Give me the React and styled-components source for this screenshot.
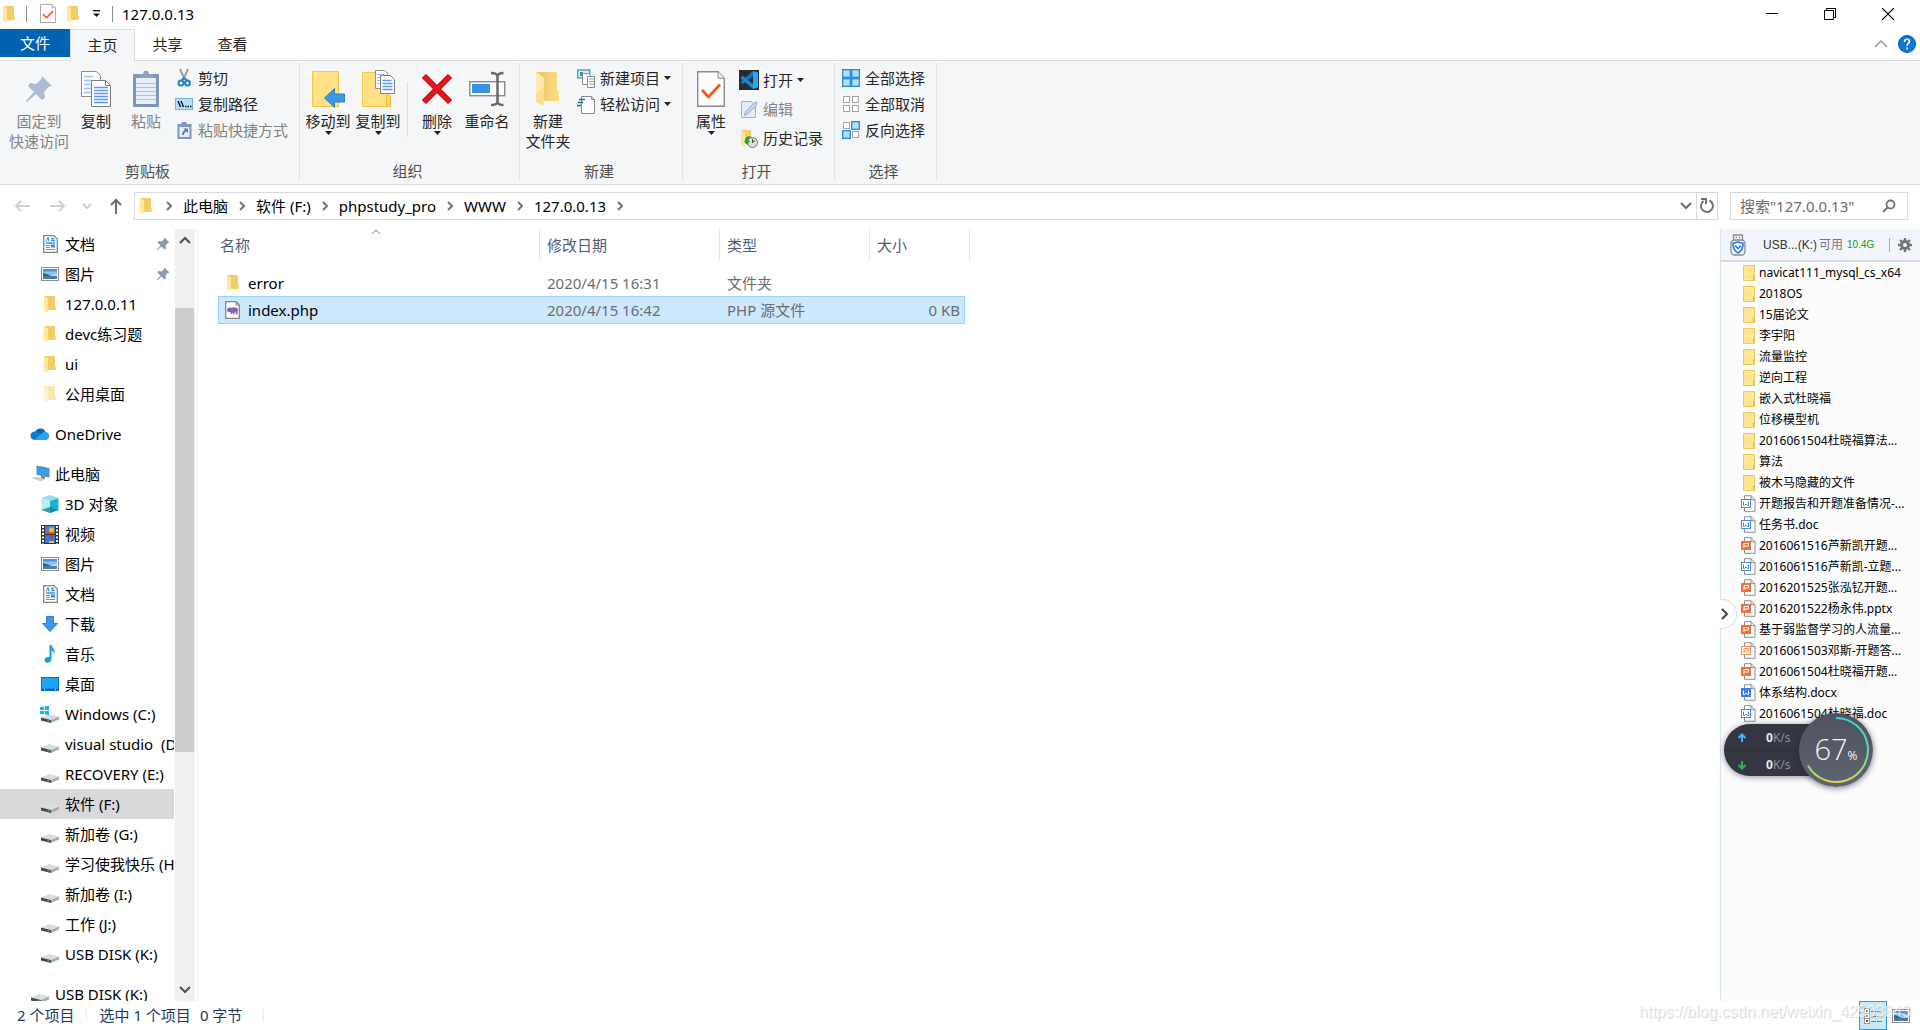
import React from "react";
import styled, { createGlobalStyle } from "styled-components";

const GlobalStyle = createGlobalStyle`
  *, *::before, *::after { box-sizing: border-box; }
  html, body, #root { height: 100%; }
  body {
    margin: 0;
    overflow: hidden;
    background: #fff;
    color: #000;
    font: 15px/20px "Noto Sans", "Noto Sans CJK SC", sans-serif;
  }
  button, input { font: inherit; color: inherit; }
  button { border: 0; padding: 0; background: none; white-space: nowrap; }
  ul, ol { list-style: none; margin: 0; padding: 0; }
  svg { display: block; flex: none; }
  a { color: inherit; text-decoration: none; }
`;

/* ---------- layout ---------- */

const Window = styled.div`
  display: flex;
  flex-direction: column;
  height: 100vh;
`;

const TitleBar = styled.header`
  display: flex;
  align-items: center;
  height: 29px;
  flex: none;
  padding: 0 3px 2px 0;
`;

const QuickAccess = styled.div`
  display: flex;
  align-items: center;
  flex: 1;
  gap: 5px;
`;

const QuickButton = styled.button`
  display: flex;
  align-items: center;
  justify-content: center;
  width: ${(p) => (p.$narrow ? "16px" : "20px")};
  height: 20px;
`;

const TitleDivider = styled.span`
  width: 1px;
  height: 16px;
  background: #8c8c8c;
  margin: 0 6px 0 3px;
`;

const WindowTitle = styled.h1`
  margin: 0 0 0 -2px;
  font-size: 15px;
  font-weight: 400;
`;

const WindowButton = styled.button`
  display: flex;
  align-items: center;
  justify-content: center;
  width: 58px;
  height: 27px;
`;

const TabStrip = styled.nav`
  display: flex;
  height: 32px;
  flex: none;
  border-bottom: 1px solid #dadbdc;
  padding-right: 4px;
`;

const Tab = styled.button`
  width: 65px;
  height: 30px;
  color: #262626;
`;

const FileTab = styled(Tab)`
  width: 70px;
  height: 28px;
  background: #0063b1;
  color: #fff;
`;

const ActiveTab = styled(Tab)`
  height: 32px;
  padding-bottom: 2px;
  background: #f5f6f7;
  border: 1px solid #dadbdc;
  border-bottom: 0;
`;

const TabTools = styled.div`
  display: flex;
  align-items: center;
  gap: 10px;
  margin-left: auto;
  padding-bottom: 2px;
`;

const Ribbon = styled.section`
  display: flex;
  height: 124px;
  flex: none;
  padding: 2px 0 3px;
  background: #f5f6f7;
  border-bottom: 1px solid #dadbdc;
`;

const RibbonGroup = styled.div`
  display: flex;
  flex-direction: column;
  justify-content: space-between;
  padding: 0 7px 0 3px;
  border-right: 1px solid #e2e3e4;
`;

const GroupBody = styled.div`
  display: flex;
  padding-top: 4px;
`;

const GroupName = styled.span`
  text-align: center;
  color: #505050;
`;

const BigButton = styled.button`
  display: flex;
  flex-direction: column;
  align-items: center;
  width: ${(p) => (p.$wide ? "68px" : "50px")};
  padding-left: ${(p) => (p.$wide ? "4px" : "0")};
  height: 88px;
  color: ${(p) => (p.disabled ? "#838383" : "#262626")};
`;

const BigIcon = styled.span`
  display: flex;
  align-items: center;
  justify-content: center;
  height: 44px;
`;

const SmallColumn = styled.div`
  display: flex;
  flex-direction: column;
  gap: ${(p) => (p.$loose ? "9px" : "6px")};
  padding: ${(p) => (p.$loose ? "3px 4px 0 3px" : "1px 4px 0 3px")};
`;

const SmallButton = styled.button`
  display: flex;
  align-items: center;
  gap: 4px;
  height: 20px;
  color: ${(p) => (p.disabled ? "#838383" : "#262626")};
`;

const SmallIcon = styled.span`
  display: flex;
  align-items: center;
  justify-content: center;
  width: 20px;
  height: 20px;
`;

const BodyDivider = styled.span`
  width: 1px;
  height: 55px;
  margin: 15px 4px 0;
  background: #dfe0e1;
`;

const NavBar = styled.div`
  display: flex;
  align-items: center;
  height: 44px;
  flex: none;
  padding: 0 12px 2px 4px;
`;

const NavButton = styled.button`
  display: flex;
  align-items: center;
  justify-content: center;
  width: ${(p) => (p.$narrow ? "22px" : "36px")};
  height: 28px;
`;

const AddressBox = styled.div`
  display: flex;
  align-items: center;
  flex: 1;
  height: 28px;
  border: 1px solid #d9d9d9;
  padding-left: 2px;
`;

const Crumbs = styled.ol`
  display: flex;
  align-items: center;
  flex: 1;
  & > li { display: flex; align-items: center; }
`;

const CrumbArrow = styled.span`
  display: flex;
  justify-content: center;
  width: 28px;
`;

const AddressButton = styled.button`
  display: flex;
  align-items: center;
  justify-content: center;
  width: 21px;
  height: 26px;
  border-left: ${(p) => (p.$divided ? "1px solid #d9d9d9" : "0")};
`;

const SearchBox = styled.label`
  display: flex;
  align-items: center;
  width: 178px;
  height: 28px;
  margin-left: 12px;
  padding: 0 11px 0 9px;
  border: 1px solid #d9d9d9;
`;

const SearchInput = styled.input`
  flex: 1;
  min-width: 0;
  padding: 0;
  border: 0;
  outline: 0;
  background: none;
  &::placeholder { color: #6d6d6d; opacity: 1; }
`;

const Main = styled.div`
  display: flex;
  flex: 1;
  min-height: 0;
`;

const Sidebar = styled.aside`
  display: flex;
  width: 198px;
  flex: none;
  border-right: 1px solid #f2f2f2;
`;

const Tree = styled.ul`
  width: 174px;
  overflow: hidden;
`;

const TreeItem = styled.li`
  display: flex;
  align-items: center;
  height: 30px;
  margin-top: ${(p) => (p.$section ? "10px" : "0")};
  padding-left: ${(p) => (p.$top ? "30px" : "40px")};
  padding-right: 4px;
  gap: 5px;
  background: ${(p) => (p.$selected ? "#d9d9d9" : "transparent")};
  white-space: pre;
`;

const TreeIcon = styled.span`
  display: flex;
  align-items: center;
  justify-content: center;
  width: 20px;
  flex: none;
`;

const TreeLabel = styled.a`
  flex: 1 0 auto;
`;

const ScrollBar = styled.div`
  display: flex;
  flex-direction: column;
  justify-content: space-between;
  width: 20px;
  margin-left: 1px;
  background: #f0f0f0;
`;

const ScrollButton = styled.button`
  display: flex;
  align-items: center;
  justify-content: center;
  width: 19px;
  height: 22px;
`;

const ScrollTrack = styled.div`
  display: flex;
  flex-direction: column;
  flex: 1;
  &::before { content: ""; flex: 57; }
  &::after { content: ""; flex: 227; }
`;

const ScrollThumb = styled.div`
  flex: 444;
  width: 19px;
  background: #cdcdcd;
`;

const FileArea = styled.main`
  flex: 1;
  min-width: 0;
  padding-left: 20px;
`;

const FileTable = styled.table`
  width: 747px;
  table-layout: fixed;
  border-collapse: collapse;
  text-align: left;
`;

const HeadCell = styled.th`
  position: relative;
  width: ${(p) => p.$width};
  height: 32px;
  padding: 0 0 0 ${(p) => (p.$first ? "2px" : "7px")};
  font-weight: 400;
  color: #4c607a;
  &::after {
    content: "";
    position: absolute;
    top: 0;
    right: ${(p) => (p.$last ? "-5px" : "0")};
    width: 1px;
    height: 32px;
    background: #e5e5e5;
  }
`;

const SortMark = styled.span`
  position: absolute;
  top: 0;
  left: 50%;
  margin-left: -8px;
`;

const BodySpacer = styled.tr`
  height: 8px;
`;

const FileRow = styled.tr`
  height: ${(p) => (p.$selected ? "28px" : "27px")};
  background: ${(p) => (p.$selected ? "#cce8ff" : "transparent")};
  outline: ${(p) => (p.$selected ? "1px solid #99d1ff" : "0")};
  outline-offset: -1px;
`;

const FileCell = styled.td`
  padding: 0 5px 0 7px;
  color: #6d6d6d;
  text-align: ${(p) => (p.$right ? "right" : "left")};
`;

const FileName = styled.a`
  display: flex;
  align-items: center;
  gap: 8px;
  color: #000;
`;

const FileIcon = styled.span`
  display: flex;
  justify-content: center;
  width: 15px;
`;

const UsbPane = styled.aside`
  position: relative;
  width: 200px;
  flex: none;
  background: #fcfcfc;
  border-left: 1px solid #d3e5f7;
`;

const UsbHeader = styled.header`
  display: flex;
  align-items: center;
  height: 33px;
  padding: 0 8px 0 9px;
  background: #f2f6fc;
  border-bottom: 2px solid #d4dae3;
  font-size: 12px;
  line-height: 20px;
  color: #777;
`;

const UsbName = styled.span`
  margin-left: 17px;
  color: #333;
  font-family: "Liberation Sans", "Noto Sans CJK SC", sans-serif;
`;

const UsbFree = styled.span`
  margin: 0 4px 0 2px;
`;

const UsbSize = styled.span`
  color: #159a15;
  font-size: 10px;
  font-family: "Liberation Sans", sans-serif;
`;

const UsbDivider = styled.span`
  width: 1px;
  height: 14px;
  margin: 0 8px 0 auto;
  background: #aaa;
`;

const UsbList = styled.ul`
  font-size: 12px;
  line-height: 21px;
`;

const UsbItem = styled.li`
  display: flex;
  align-items: center;
  gap: 3px;
  height: 21px;
  padding-left: 20px;
  white-space: nowrap;
`;

const PaneToggle = styled.button`
  position: absolute;
  left: -1px;
  top: 370px;
  display: flex;
  align-items: center;
  justify-content: center;
  width: 17px;
  height: 30px;
  padding-right: 6px;
  background: #fff;
  border: 1px solid #d3e0ee;
  border-left: 0;
  border-radius: 0 15px 15px 0;
`;

const SpeedWidget = styled.div`
  position: absolute;
  left: 3px;
  top: 484px;
  display: flex;
  align-items: center;
  width: 149px;
  height: 74px;
`;

const SpeedPill = styled.div`
  width: 100px;
  height: 52px;
  border-radius: 26px 0 0 26px;
  background: #343741;
  box-shadow: 0 1px 6px rgba(40, 30, 70, 0.5);
`;

const SpeedLine = styled.div`
  display: flex;
  align-items: center;
  height: 26px;
  padding: 2px 0 0 13px;
  gap: 19px;
  color: #8d919b;
  font-size: 12px;
  line-height: 20px;
  & + & { border-top: 1px solid #2b2e36; }
  & b { color: #e8e8ea; }
`;

const Gauge = styled.div`
  position: relative;
  display: flex;
  align-items: baseline;
  justify-content: center;
  width: 74px;
  height: 74px;
  margin-left: -25px;
  padding-top: 16px;
  border-radius: 50%;
  background: linear-gradient(#4e525f, #5f6472);
  box-shadow: 0 1px 6px rgba(30, 30, 50, 0.6);
  color: #f2f2f4;
  font-family: "Open Sans", "Noto Sans", sans-serif;
  font-size: 29px;
  line-height: 40px;
  font-weight: 300;
  & small { font-size: 12px; font-weight: 400; }
  & svg { position: absolute; left: 0; top: 0; }
`;

const StatusBar = styled.footer`
  position: relative;
  display: flex;
  align-items: center;
  height: 29px;
  flex: none;
  padding-left: 17px;
  color: #1e395b;
`;

const StatusInfo = styled.div`
  display: flex;
  align-items: center;
  padding-bottom: 2px;
`;

const StatusDivider = styled.span`
  width: 1px;
  height: 14px;
  margin: 0 12px;
  background: #ececec;
`;

const StatusText = styled.span`
  margin-right: 9px;
  &:first-child { margin: 0; }
`;

const ViewButtons = styled.div`
  display: flex;
  margin-left: auto;
  padding-right: 5px;
`;

const ViewButton = styled.button`
  display: flex;
  align-items: center;
  justify-content: center;
  width: 28px;
  height: 29px;
  background: ${(p) => (p.$active ? "#cbe8f6" : "transparent")};
  border: ${(p) => (p.$active ? "1px solid #26a0da" : "0")};
`;

const Watermark = styled.span`
  position: absolute;
  right: 9px;
  top: 1px;
  color: rgba(255, 255, 255, 0.7);
  text-shadow: 1px 1px 1px rgba(140, 140, 140, 0.4);
  font: 16px/20px "Liberation Sans", sans-serif;
  pointer-events: none;
`;

/* ---------- icons ---------- */

const Folder = ({ size = 18, faded }) => (
  <svg width={size} height={size} viewBox="0 0 18 18" opacity={faded ? 0.5 : 1}>
    <path d="M3 1h11v9.5l1 1V15H6z" fill="#f7d673" />
    <path d="M3 1h11v9.5l-1 1V15H8z" fill="#efc75e" opacity=".55" />
    <path d="M3 1l4 2.5v14L3 15.5z" fill="#ffe79b" />
  </svg>
);

const FolderNew = () => (
  <svg width="28" height="38" viewBox="0 0 28 38">
    <defs>
      <linearGradient id="fn" x1="0" x2="1"><stop offset="0" stopColor="#e9c35c" /><stop offset="1" stopColor="#ffdf87" /></linearGradient>
    </defs>
    <path d="M2 2h21v17l2 3v9H8z" fill="url(#fn)" />
    <path d="M2 2l8 6v27l-1 1-7-4z" fill="#ffe08a" />
    <path d="M2 2l8 6v8L2 24z" fill="#ffeeb4" opacity=".8" />
  </svg>
);

const FlatFolder = () => (
  <svg width="15" height="18" viewBox="0 0 15 18">
    <path d="M2.5 1.5h11v15h-11z" fill="#ffe591" stroke="#eccb55" />
    <path d="M12.500 16v-4.500l1-1" fill="none" stroke="#e3bd42" />
  </svg>
);

const Caret = () => (
  <svg width="7" height="4" viewBox="0 0 7 4"><path d="M0 0h7L3.5 4z" fill="#1f1f1f" /></svg>
);

const CheckDoc = ({ w = 16, h = 19 }) => (
  <svg width={w} height={h} viewBox="0 0 28 36" preserveAspectRatio="none">
    <path d="M.7.7H21l6.3 6.5v28H.7z" fill="#fff" stroke="#8b8b8b" strokeWidth="1.4" />
    <path d="M21 .7v6.5h6.3" fill="#eee" stroke="#8b8b8b" />
    <path d="M5 19l6.5 7L23 13.5" fill="none" stroke="#f0561d" strokeWidth="2.8" />
  </svg>
);

const Pin = ({ size = 28, color = "#acbdd3" }) => (
  <svg width={size} height={size} viewBox="0 0 28 28">
    <path d="M17 1l10 10-3.500 1-4.500 5 1 6-3 2-6-6-9 8-1-1 8-9-6-6 2-3 6 1 5-4.500z" fill={color} />
  </svg>
);

const CopyDocs = () => (
  <svg width="32" height="38" viewBox="0 0 32 38">
    <path d="M1.500 1.500h15l4 4v21h-19z" fill="#fff" stroke="#8e8e8e" />
    <path d="M4 6.500h9M4 10.500h10M4 14.500h7M4 18.500h7M4 22.500h7" stroke="#9fc0f5" strokeWidth="1.500" />
    <path d="M11.500 10.500h14l5 5v21h-19z" fill="#fff" stroke="#7c7c7c" />
    <path d="M25.500 10.500v5h5" fill="none" stroke="#7c7c7c" />
    <path d="M14 17.500h14M14 20.500h14M14 23.500h14M14 26.500h14M14 29.500h14M14 32.500h14" stroke="#5b99f5" strokeWidth="1.500" />
  </svg>
);

const Clipboard = () => (
  <svg width="28" height="38" viewBox="0 0 28 38">
    <rect x="1" y="4" width="26" height="33" rx="1" fill="#8095b8" />
    <rect x="4" y="8" width="20" height="26" fill="#e8eef7" />
    <path d="M4 13.500h20M4 17.500h20M4 21.500h20M4 25.500h20M4 29.500h20" stroke="#b5c4dc" />
    <path d="M7 8V4h4l1-3h4l1 3h4v4z" fill="#8ba1c2" />
  </svg>
);

const Scissors = () => (
  <svg width="16" height="20" viewBox="0 0 16 20">
    <path d="M4 1l5 11M12 1L7 12" stroke="#9a9fa5" strokeWidth="2" />
    <circle cx="5" cy="15" r="2.500" fill="none" stroke="#1f86c4" strokeWidth="2" />
    <circle cx="11.500" cy="15" r="2.500" fill="none" stroke="#1f86c4" strokeWidth="2" />
    <path d="M6 12l2-2 3 2" stroke="#1f86c4" strokeWidth="2" fill="none" />
  </svg>
);

const PathIcon = () => (
  <svg width="18" height="12" viewBox="0 0 18 12">
    <rect x=".5" y=".5" width="17" height="11" fill="#b9def8" stroke="#79b3dc" />
    <path d="M3 3l2.500 6M6 3l2.500 6" stroke="#111" strokeWidth="1.400" />
    <path d="M10 8.500h1.500M12.500 8.500H14M15 8.500h1.500" stroke="#111" strokeWidth="1.500" />
  </svg>
);

const PasteLink = () => (
  <svg width="15" height="19" viewBox="0 0 15 19">
    <path d="M.5 3H4l1-2h4l1 2h4.500v15H.500z" fill="#8197bb" />
    <rect x="2.500" y="6" width="10" height="10" fill="#e6edf6" />
    <path d="M5 14c0-3 1-4 3-5L6.500 7.500H11V12L9.500 10.500C8 11 7 12 7 14z" fill="#5f7ba8" />
  </svg>
);

const MoveTo = () => (
  <svg width="34" height="38" viewBox="0 0 34 38">
    <path d="M1.500 1.500h26v35h-26z" fill="#ffe084" stroke="#f0c948" />
    <path d="M4.500 2v34" stroke="#ffedb5" />
    <path d="M13.500 28l10-9.500v5.500h10v8h-10v5.500z" fill="#3d98e6" stroke="#2b7fc6" />
  </svg>
);

const CopyTo = () => (
  <svg width="34" height="38" viewBox="0 0 34 38">
    <path d="M1.500 2.500h25v23l3 1v10h-28z" fill="#ffe084" stroke="#f0c948" />
    <path d="M25.500 36V26l2-1.500 2 1.500v10" fill="#ffd667" stroke="#e9bd3b" />
    <path d="M14.500.500h9l3 3v15h-12z" fill="#fff" stroke="#909090" />
    <path d="M16 4.500h7M16 7.500h4M16 10.500h4M16 13.500h4" stroke="#8fb8f5" />
    <path d="M19.500 5.500h10l4 4v14h-14z" fill="#fff" stroke="#7f7f7f" />
    <path d="M21.500 10.500h9M21.500 13.500h10M21.500 16.500h10M21.500 19.500h10" stroke="#5b99f5" strokeWidth="1.500" />
  </svg>
);

const DeleteX = () => (
  <svg width="32" height="32" viewBox="0 0 32 32">
    <path d="M3 3l26 26M29 3L3 29" stroke="#a80d16" strokeWidth="6" />
    <path d="M3 3l26 26M29 3L3 29" stroke="#e8111c" strokeWidth="4.500" />
  </svg>
);

const Rename = () => (
  <svg width="37" height="36" viewBox="0 0 37 36">
    <rect x=".7" y="10.700" width="35" height="14" fill="#fff" stroke="#8b8b8b" strokeWidth="1.400" />
    <rect x="3" y="13" width="18" height="9" fill="#3794e8" />
    <path d="M28.500 4v28M22 2c4 0 6 1 6.500 3 .5-2 2.500-3 6-3M22 34c4 0 6-1 6.500-3 .5 2 2.500 3 6 3" fill="none" stroke="#686868" strokeWidth="2.500" />
  </svg>
);

const NewItem = () => (
  <svg width="19" height="19" viewBox="0 0 19 19">
    <rect x=".7" y="1" width="12" height="8" fill="#d6edf8" stroke="#4d94bb" strokeWidth="1.300" />
    <path d="M3 3h3v4H3z" fill="#4d8f86" />
    <path d="M5.500 4.500h6l2 2v9h-8z" fill="#fff" stroke="#8b8b8b" />
    <path d="M10.500 7.500h7v11h-7z" fill="#fff" stroke="#8b8b8b" />
    <path d="M12 10h5M12 12.500h5M12 15h5" stroke="#6ba3ef" />
  </svg>
);

const EasyAccess = () => (
  <svg width="19" height="19" viewBox="0 0 19 19">
    <path d="M4.500 1.500h10l3 3v14h-13z" fill="#fff" stroke="#8b8b8b" />
    <path d="M14.500 1.500v3h3" fill="none" stroke="#8b8b8b" />
    <path d="M2 4.500h6M1 7.500h5M0 10.500h4" stroke="#1c69b5" strokeWidth="1.500" />
  </svg>
);

const VsCode = () => (
  <svg width="20" height="20" viewBox="0 0 20 20">
    <rect width="20" height="20" fill="#2a2b2e" />
    <path d="M14 1v5L4 14l-2-1v-1.500z" fill="#0a79c4" />
    <path d="M14 19v-5L4 6 2 7v1.500z" fill="#1789d6" />
    <path d="M14 1l5 1.500v15L14 19z" fill="#2ba4f3" />
  </svg>
);

const EditDoc = () => (
  <svg width="17" height="19" viewBox="0 0 17 19">
    <path d="M.500 1.500h10l4 4v12H.500z" fill="#e4ebf5" stroke="#9db1cf" />
    <path d="M3.500 15.500l1-4L13 3l3-1-1 4-8.500 8z" fill="#c6d3e6" stroke="#9db1cf" />
  </svg>
);

const History = () => (
  <svg width="18" height="19" viewBox="0 0 18 19">
    <path d="M1 1h10v14H4z" fill="#f3cf69" /><path d="M1 1l4 3v14l-4-3z" fill="#ffe491" />
    <circle cx="12.500" cy="13.500" r="5" fill="#dcdcdc" stroke="#777" />
    <path d="M12.500 10v3.500l2.500-2" fill="none" stroke="#444" />
    <path d="M5 12h3c0-3 2-4 4-4-4-2-7 0-7 4zM4 12l3 4 3-4z" fill="#1ea52b" />
  </svg>
);

const Squares = ({ on }) => (
  <svg width="18" height="18" viewBox="0 0 18 18">
    {[[0, 0], [9, 0], [0, 9], [9, 9]].map(([x, y], i) => (
      <rect
        key={i}
        x={x + (on[i] ? 0.7 : 1.5)}
        y={y + (on[i] ? 0.7 : 1.5)}
        width={on[i] ? 7.6 : 6}
        height={on[i] ? 7.6 : 6}
        fill={on[i] ? "#b6e0ff" : "#fdfdfd"}
        stroke={on[i] ? "#2f8fdd" : "#a5a5a5"}
        strokeWidth={on[i] ? 1.4 : 1}
      />
    ))}
  </svg>
);

const Arrow = ({ d, color = "#d0d0d0", w = 16, h = 16, sw = 2 }) => (
  <svg width={w} height={h} viewBox={`0 0 ${w} ${h}`}><path d={d} fill="none" stroke={color} strokeWidth={sw} /></svg>
);

const Refresh = () => (
  <svg width="16" height="16" viewBox="0 0 16 16">
    <path d="M10.500 2.500a6 6 0 1 1-6 .500" fill="none" stroke="#6e6e6e" strokeWidth="2" />
    <path d="M2 1h5v5" fill="none" stroke="#6e6e6e" strokeWidth="2" />
  </svg>
);

const Magnifier = () => (
  <svg width="14" height="14" viewBox="0 0 14 14">
    <circle cx="8.500" cy="5.500" r="4" fill="none" stroke="#747474" strokeWidth="1.800" />
    <path d="M5.500 8.500L1 13" stroke="#747474" strokeWidth="2" />
  </svg>
);

const DocText = () => (
  <svg width="15" height="18" viewBox="0 0 15 18">
    <path d="M.7.700H11l3.300 3.300v13.300H.700z" fill="#fff" stroke="#868686" strokeWidth="1.300" />
    <path d="M8 3.500h3M8 5.500h4M3 8h9" stroke="#2f9bea" strokeWidth="1.300" />
    <path d="M3 6.500L5 2.500l1 4" stroke="#2a86cf" fill="none" />
    <path d="M3 10.500h4M3 12.500h4M3 14.500h9" stroke="#8a8a8a" />
    <rect x="8" y="9.500" width="4" height="3" fill="#2d9ad8" />
  </svg>
);

const PictureIcon = () => (
  <svg width="18" height="14" viewBox="0 0 18 14">
    <rect x=".500" y=".500" width="17" height="13" fill="#fff" stroke="#8d8d8d" />
    <rect x="2" y="2" width="14" height="10" fill="#8ec3f7" />
    <path d="M2 2h14v2.500H2z" fill="#4e8fe6" />
    <path d="M2 6l4 1 5 2.500H2z" fill="#2f6b62" />
    <path d="M2 9h14v3H2z" fill="#487f9b" />
    <path d="M9 8.500l7-1.500v2z" fill="#c9e4f5" />
  </svg>
);

const Cloud = () => (
  <svg width="20" height="14" viewBox="0 0 20 14">
    <path d="M5 6a5.500 5.500 0 0 1 10.500-1L12 9z" fill="#0a64b8" />
    <path d="M4.500 13A4.200 4.200 0 0 1 5 4.500c2 0 3 1 4 1.500l3 4z" fill="#1079d2" />
    <path d="M4 13l8-7c1-1 3-1.500 4-1a4.200 4.200 0 0 1 .5 8z" fill="#27a3ee" />
  </svg>
);

const Computer = () => (
  <svg width="20" height="18" viewBox="0 0 20 18">
    <path d="M7 1l12 2.500V12L7 9.500z" fill="#35a1ee" stroke="#5d7587" strokeWidth=".8" />
    <path d="M11 11l4 .8v2h-4z" fill="#777" />
    <path d="M1 13l5-1.500 9 2.500-4 2.500z" fill="#cbd0d4" />
  </svg>
);

const Cube = () => (
  <svg width="18" height="18" viewBox="0 0 18 18">
    <path d="M9 0l8.500 3L9 6 .500 3z" fill="#8fe3e6" />
    <path d="M.500 3L9 6v12l-8.500-3z" fill="#bdeeee" />
    <path d="M17.500 3L9 6v12l8.500-3z" fill="#18b3cf" />
    <path d="M9 12l8.500 3L9 18 .500 15z" fill="#0a8a9c" opacity=".8" />
  </svg>
);

const Film = () => (
  <svg width="18" height="19" viewBox="0 0 18 19">
    <rect width="18" height="19" fill="#333" />
    <path d="M2 1v18M16 1v18" stroke="#fff" strokeWidth="2" strokeDasharray="2 1.500" />
    <rect x="4" y="1" width="10" height="8" fill="#4e7fd8" /><rect x="4" y="10" width="10" height="8" fill="#3f74d4" />
    <circle cx="10.500" cy="5" r="2.500" fill="#e7c52b" /><path d="M4 7h10v2H4z" fill="#d4572e" />
    <circle cx="10.500" cy="12" r="1.500" fill="#c83b35" /><path d="M8 16h5v2H8z" fill="#e7c52b" />
  </svg>
);

const Download = () => (
  <svg width="18" height="18" viewBox="0 0 18 18"><path d="M5.500 1.500h7v7h4L9 16.500l-7.500-8h4z" fill="#3c98e8" stroke="#2f7fc6" /></svg>
);

const Note = () => (
  <svg width="14" height="18" viewBox="0 0 14 18">
    <path d="M6.500 0h2c.5 3 4.500 4.500 3 9-.5-2.500-1.500-3-3-3.500V14c0 4-6.500 5-7 1.500C1.300 12.500 4 11.500 6.500 12z" fill="#119bf1" />
  </svg>
);

const Desktop = () => (
  <svg width="18" height="14" viewBox="0 0 18 14">
    <rect x=".5" y=".5" width="17" height="13" fill="#1fa2fa" stroke="#0b70bd" />
    <path d="M1 12.500h16" stroke="#0c5a9b" strokeWidth="1.500" /><path d="M3 12.500h1M14 12.500h1" stroke="#fff" />
  </svg>
);

const Drive = ({ win }) => (
  <svg width="20" height="20" viewBox="0 0 20 20">
    <path d="M1 13.500L9 10l10 2.500-8 3.500z" fill="#dcdddf" />
    <path d="M1 13.500l10 2.500v3L1 16.500z" fill="#444a47" />
    <path d="M11 16l8-3.500v3L11 19z" fill="#a9abad" />
    <path d="M7.500 16.500l2 .5" stroke="#4dd35a" strokeWidth="1.200" />
    {win && <path d="M0 3l4-.5V6H0zM4.800 2.300L9 2v4H4.800zM0 7h4v3.300L0 10zM4.800 7H9v4l-4.200-.5z" fill="#0fb3f0" />}
  </svg>
);

const PhpFile = () => (
  <svg width="15" height="18" viewBox="0 0 15 18">
    <path d="M.7.700H11l3.300 3.300v13.300H.700z" fill="#fff" stroke="#868686" strokeWidth="1.300" />
    <path d="M11 .7V4h3.300" fill="none" stroke="#868686" />
    <path d="M2 9.500C2 6.500 5 6 6.500 7c2-1.500 6.500-.5 6.500 1.500l-.5 2.500v2.500H11V11.500H9.500v2H8V11.500L6.500 13l-1-.5V11L3 11z" fill="#8a63b0" />
  </svg>
);

const OfficeFile = ({ color, solid, word }) => (
  <svg width="15" height="17" viewBox="0 0 15 17">
    <path d="M3.500 4V.700H10l4 4v11.600H3.500V13" fill="#fff" stroke="#8e8e8e" />
    <path d="M10 .7v4h4" fill="none" stroke="#8e8e8e" />
    <rect x=".5" y="4.500" width="9" height="8" fill={solid ? color : "#fff"} stroke={color} />
    <path
      d={word ? "M2.500 6.500v4h1L5 9l1.500 1.500h1v-4" : "M3 11V6.500h4.500V9H3"}
      fill="none"
      stroke={solid ? "#fff" : color}
    />
  </svg>
);

const UsbStick = () => (
  <svg width="16" height="22" viewBox="0 0 16 22">
    <path d="M3.500 6V1h9v5" fill="#fff" stroke="#8a8a8a" strokeWidth="1.300" /><path d="M5.500 3.500h1.500M9 3.500h1.500" stroke="#888" strokeWidth="1.500" />
    <rect x="1" y="6" width="14" height="15" rx="3.500" fill="#f7f7f7" stroke="#8a8a8a" strokeWidth="1.300" />
    <path d="M8 8l5 1.500c0 5-1.500 7.500-5 9.500-3.500-2-5-4.500-5-9.500z" fill="#fff" stroke="#2f7df6" strokeWidth="1.700" />
    <path d="M5 11.500l3 3 3-3" fill="none" stroke="#2f7df6" strokeWidth="1.700" />
  </svg>
);

const Gear = () => (
  <svg width="14" height="14" viewBox="0 0 14 14">
    <circle cx="7" cy="7" r="3.500" fill="none" stroke="#757575" strokeWidth="3" />
    <path d="M7 0v3M7 11v3M0 7h3M11 7h3M2 2l2 2M10 10l2 2M12 2l-2 2M4 10l-2 2" stroke="#757575" strokeWidth="2.400" />
  </svg>
);

const Help = () => (
  <svg width="18" height="18" viewBox="0 0 18 18">
    <circle cx="9" cy="9" r="8.500" fill="#0a78d6" stroke="#0b5a9f" />
    <path d="M6.500 7c0-3.500 5-3.500 5-.5 0 2-2.500 2-2.500 4.500M9 12.500v2" fill="none" stroke="#fff" strokeWidth="1.600" />
  </svg>
);

const DetailsView = () => (
  <svg width="20" height="18" viewBox="0 0 20 18">
    {["#3d6f9e", "#b39b3c", "#c0392b"].map((c, i) => (
      <g key={c}>
        <rect x="1.500" y={1.5 + i * 5} width="5" height="5" fill="#fff" stroke="#999" />
        <rect x="3" y={3 + i * 5} width="2" height="2" fill={c} />
        <path d={`M8 ${4.5 + i * 5}h5M14 ${4.5 + i * 5}h5`} stroke="#777" />
      </g>
    ))}
  </svg>
);

/* ---------- data ---------- */

const tree = [
  { label: "文档", icon: <DocText />, pinned: true },
  { label: "图片", icon: <PictureIcon />, pinned: true },
  { label: "127.0.0.11", icon: <Folder /> },
  { label: "devc练习题", icon: <Folder /> },
  { label: "ui", icon: <Folder /> },
  { label: "公用桌面", icon: <Folder faded /> },
  { label: "OneDrive", icon: <Cloud />, top: true, section: true },
  { label: "此电脑", icon: <Computer />, top: true, section: true },
  { label: "3D 对象", icon: <Cube /> },
  { label: "视频", icon: <Film /> },
  { label: "图片", icon: <PictureIcon /> },
  { label: "文档", icon: <DocText /> },
  { label: "下载", icon: <Download /> },
  { label: "音乐", icon: <Note /> },
  { label: "桌面", icon: <Desktop /> },
  { label: "Windows (C:)", icon: <Drive win /> },
  { label: "visual studio  (D:)", icon: <Drive /> },
  { label: "RECOVERY (E:)", icon: <Drive /> },
  { label: "软件 (F:)", icon: <Drive />, selected: true },
  { label: "新加卷 (G:)", icon: <Drive /> },
  { label: "学习使我快乐 (H:)", icon: <Drive /> },
  { label: "新加卷 (I:)", icon: <Drive /> },
  { label: "工作 (J:)", icon: <Drive /> },
  { label: "USB DISK (K:)", icon: <Drive /> },
  { label: "USB DISK (K:)", icon: <Drive />, top: true, section: true },
];

const usbIcons = {
  dir: <FlatFolder />,
  doc: <OfficeFile color="#4a86e8" word />,
  docx: <OfficeFile color="#3f7df0" word solid />,
  pptx: <OfficeFile color="#f26f36" solid />,
  ppt: <OfficeFile color="#f08a5d" />,
};

const usbFiles = [
  ["dir", "navicat111_mysql_cs_x64"],
  ["dir", "2018OS"],
  ["dir", "15届论文"],
  ["dir", "李宇阳"],
  ["dir", "流量监控"],
  ["dir", "逆向工程"],
  ["dir", "嵌入式杜晓福"],
  ["dir", "位移模型机"],
  ["dir", "2016061504杜晓福算法..."],
  ["dir", "算法"],
  ["dir", "被木马隐藏的文件"],
  ["doc", "开题报告和开题准备情况-..."],
  ["doc", "任务书.doc"],
  ["pptx", "2016061516芦新凯开题..."],
  ["doc", "2016061516芦新凯-立题..."],
  ["pptx", "2016201525张泓钇开题..."],
  ["pptx", "2016201522杨永伟.pptx"],
  ["pptx", "基于弱监督学习的人流量..."],
  ["ppt", "2016061503邓斯-开题答..."],
  ["pptx", "2016061504杜晓福开题..."],
  ["docx", "体系结构.docx"],
  ["doc", "2016061504杜晓福.doc"],
];

const crumbs = ["此电脑", "软件 (F:)", "phpstudy_pro", "WWW", "127.0.0.13"];

/* ---------- parts ---------- */

const Big = ({ icon, lines, caret, ...rest }) => (
  <BigButton {...rest}>
    <BigIcon>{icon}</BigIcon>
    {lines.map((l) => <span key={l}>{l}</span>)}
    {caret && <Caret />}
  </BigButton>
);

const Small = ({ icon, label, caret, ...rest }) => (
  <SmallButton {...rest}>
    <SmallIcon>{icon}</SmallIcon>
    {label}
    {caret && <Caret />}
  </SmallButton>
);

const Group = ({ name, children }) => (
  <RibbonGroup>
    <GroupBody>{children}</GroupBody>
    <GroupName>{name}</GroupName>
  </RibbonGroup>
);

const Chevron = () => <Arrow w={6} h={10} d="M1 1l4 4-4 4" color="#757575" />;

export default function App() {
  return (
    <Window>
      <GlobalStyle />
      <TitleBar>
        <QuickAccess>
          <Folder />
          <TitleDivider />
          <QuickButton aria-label="属性"><CheckDoc /></QuickButton>
          <QuickButton aria-label="新建文件夹"><Folder /></QuickButton>
          <QuickButton $narrow aria-label="自定义">
            <svg width="7" height="8" viewBox="0 0 7 8"><path d="M0 .7h7" stroke="#111" strokeWidth="1.400" /><path d="M0 3.500h7L3.500 7z" fill="#111" /></svg>
          </QuickButton>
          <TitleDivider />
          <WindowTitle>127.0.0.13</WindowTitle>
        </QuickAccess>
        <WindowButton aria-label="最小化"><Arrow w={12} h={12} d="M0 5.500h12" color="#000" sw={1} /></WindowButton>
        <WindowButton aria-label="还原">
          <Arrow w={12} h={12} d="M.5 2.500h9v9h-9zM2.500 2.500v-2h9v9h-2" color="#000" sw={1} />
        </WindowButton>
        <WindowButton aria-label="关闭"><Arrow w={12} h={12} d="M0 0l12 12M12 0L0 12" color="#000" sw={1.2} /></WindowButton>
      </TitleBar>

      <TabStrip>
        <FileTab>文件</FileTab>
        <ActiveTab>主页</ActiveTab>
        <Tab>共享</Tab>
        <Tab>查看</Tab>
        <TabTools>
          <button aria-label="最小化功能区"><Arrow w={14} h={8} d="M1 7l6-6 6 6" color="#9a9a9a" sw={1.5} /></button>
          <button aria-label="帮助"><Help /></button>
        </TabTools>
      </TabStrip>

      <Ribbon>
        <Group name="剪贴板">
          <Big $wide disabled icon={<Pin />} lines={["固定到", "快速访问"]} />
          <Big icon={<CopyDocs />} lines={["复制"]} />
          <Big disabled icon={<Clipboard />} lines={["粘贴"]} />
          <SmallColumn>
            <Small icon={<Scissors />} label="剪切" />
            <Small icon={<PathIcon />} label="复制路径" />
            <Small disabled icon={<PasteLink />} label="粘贴快捷方式" />
          </SmallColumn>
        </Group>
        <Group name="组织">
          <Big icon={<MoveTo />} lines={["移动到"]} caret />
          <Big icon={<CopyTo />} lines={["复制到"]} caret />
          <BodyDivider />
          <Big icon={<DeleteX />} lines={["删除"]} caret />
          <Big icon={<Rename />} lines={["重命名"]} />
        </Group>
        <Group name="新建">
          <Big icon={<FolderNew />} lines={["新建", "文件夹"]} />
          <SmallColumn>
            <Small icon={<NewItem />} label="新建项目" caret />
            <Small icon={<EasyAccess />} label="轻松访问" caret />
          </SmallColumn>
        </Group>
        <Group name="打开">
          <Big icon={<CheckDoc w={28} h={36} />} lines={["属性"]} caret />
          <SmallColumn $loose>
            <Small icon={<VsCode />} label="打开" caret />
            <Small disabled icon={<EditDoc />} label="编辑" />
            <Small icon={<History />} label="历史记录" />
          </SmallColumn>
        </Group>
        <Group name="选择">
          <SmallColumn>
            <Small icon={<Squares on={[1, 1, 1, 1]} />} label="全部选择" />
            <Small icon={<Squares on={[0, 0, 0, 0]} />} label="全部取消" />
            <Small icon={<Squares on={[0, 1, 1, 0]} />} label="反向选择" />
          </SmallColumn>
        </Group>
      </Ribbon>

      <NavBar>
        <NavButton aria-label="后退"><Arrow d="M16 8H2M7 3L2 8l5 5" /></NavButton>
        <NavButton aria-label="前进"><Arrow d="M0 8h14M9 3l5 5-5 5" /></NavButton>
        <NavButton $narrow aria-label="最近"><Arrow w={10} h={6} d="M1 1l4 4 4-4" /></NavButton>
        <NavButton aria-label="上移"><Arrow d="M8 16V2M3 7l5-5 5 5" color="#6e6e6e" /></NavButton>
        <AddressBox>
          <Folder />
          <Crumbs>
            <li><CrumbArrow><Chevron /></CrumbArrow></li>
            {crumbs.map((c) => (
              <li key={c}><a href="#">{c}</a><CrumbArrow><Chevron /></CrumbArrow></li>
            ))}
          </Crumbs>
          <AddressButton aria-label="历史"><Arrow w={12} h={8} d="M1 1l5 5 5-5" color="#6e6e6e" /></AddressButton>
          <AddressButton $divided aria-label="刷新"><Refresh /></AddressButton>
        </AddressBox>
        <SearchBox>
          <SearchInput type="text" aria-label="搜索" placeholder={'搜索"127.0.0.13"'} />
          <Magnifier />
        </SearchBox>
      </NavBar>

      <Main>
        <Sidebar>
          <Tree>
            {tree.map((t, i) => (
              <TreeItem key={i} $top={t.top} $section={t.section} $selected={t.selected}>
                <TreeIcon>{t.icon}</TreeIcon>
                <TreeLabel href="#">{t.label}</TreeLabel>
                {t.pinned && <Pin size={14} color="#8f9ba7" />}
              </TreeItem>
            ))}
          </Tree>
          <ScrollBar>
            <ScrollButton aria-label="向上滚动"><Arrow w={12} h={8} d="M1 7l5-5 5 5" color="#505050" /></ScrollButton>
            <ScrollTrack><ScrollThumb /></ScrollTrack>
            <ScrollButton aria-label="向下滚动"><Arrow w={12} h={8} d="M1 1l5 5 5-5" color="#505050" /></ScrollButton>
          </ScrollBar>
        </Sidebar>

        <FileArea>
          <FileTable>
            <thead>
              <tr>
                <HeadCell $first $width="322px">
                  名称
                  <SortMark><Arrow w={10} h={6} d="M1 5l4-4 4 4" color="#777" sw={1} /></SortMark>
                </HeadCell>
                <HeadCell $width="180px">修改日期</HeadCell>
                <HeadCell $width="150px">类型</HeadCell>
                <HeadCell $last $width="95px">大小</HeadCell>
              </tr>
            </thead>
            <tbody>
              <BodySpacer><td colSpan={4} /></BodySpacer>
              <FileRow>
                <FileCell><FileName href="#"><FileIcon><Folder /></FileIcon>error</FileName></FileCell>
                <FileCell>2020/4/15 16:31</FileCell>
                <FileCell>文件夹</FileCell>
                <FileCell $right />
              </FileRow>
              <FileRow $selected>
                <FileCell><FileName href="#"><FileIcon><PhpFile /></FileIcon>index.php</FileName></FileCell>
                <FileCell>2020/4/15 16:42</FileCell>
                <FileCell>PHP 源文件</FileCell>
                <FileCell $right>0 KB</FileCell>
              </FileRow>
            </tbody>
          </FileTable>
        </FileArea>

        <UsbPane>
          <UsbHeader>
            <UsbStick />
            <UsbName>USB...(K:)</UsbName>
            <UsbFree>可用</UsbFree>
            <UsbSize>10.4G</UsbSize>
            <UsbDivider />
            <button aria-label="设置"><Gear /></button>
          </UsbHeader>
          <UsbList>
            {usbFiles.map(([kind, name]) => (
              <UsbItem key={name}>{usbIcons[kind]}<a href="#">{name}</a></UsbItem>
            ))}
          </UsbList>
          <PaneToggle aria-label="收起"><Arrow w={8} h={12} d="M1 1l5 5-5 5" color="#444" /></PaneToggle>
          <SpeedWidget>
            <SpeedPill>
              <SpeedLine>
                <Arrow w={10} h={10} d="M5 9V2M1.500 5L5 1.500 8.500 5" color="#4ab2ee" />
                <span><b>0</b>K/s</span>
              </SpeedLine>
              <SpeedLine>
                <Arrow w={10} h={10} d="M5 1v7M1.500 5L5 8.500 8.500 5" color="#2fb344" />
                <span><b>0</b>K/s</span>
              </SpeedLine>
            </SpeedPill>
            <Gauge>
              <svg width="74" height="74" viewBox="0 0 74 74">
                <defs>
                  <linearGradient id="ring" x1="0" y1="0" x2="0" y2="1">
                    <stop offset="0" stopColor="#3fd0d4" /><stop offset=".6" stopColor="#6fd99a" /><stop offset="1" stopColor="#d9d84a" />
                  </linearGradient>
                </defs>
                <path d="M37 5a32 32 0 1 1-28 47.500" fill="none" stroke="url(#ring)" strokeWidth="2" />
              </svg>
              67<small>%</small>
            </Gauge>
          </SpeedWidget>
        </UsbPane>
      </Main>

      <StatusBar>
        <StatusInfo>
          <StatusText>2 个项目</StatusText>
          <StatusDivider />
          <StatusText>选中 1 个项目</StatusText>
          <StatusText>0 字节</StatusText>
          <StatusDivider />
        </StatusInfo>
        <ViewButtons>
          <ViewButton $active aria-label="详细信息"><DetailsView /></ViewButton>
          <ViewButton aria-label="大图标"><PictureIcon /></ViewButton>
        </ViewButtons>
        <Watermark>https://blog.csdn.net/weixin_42503843</Watermark>
      </StatusBar>
    </Window>
  );
}
